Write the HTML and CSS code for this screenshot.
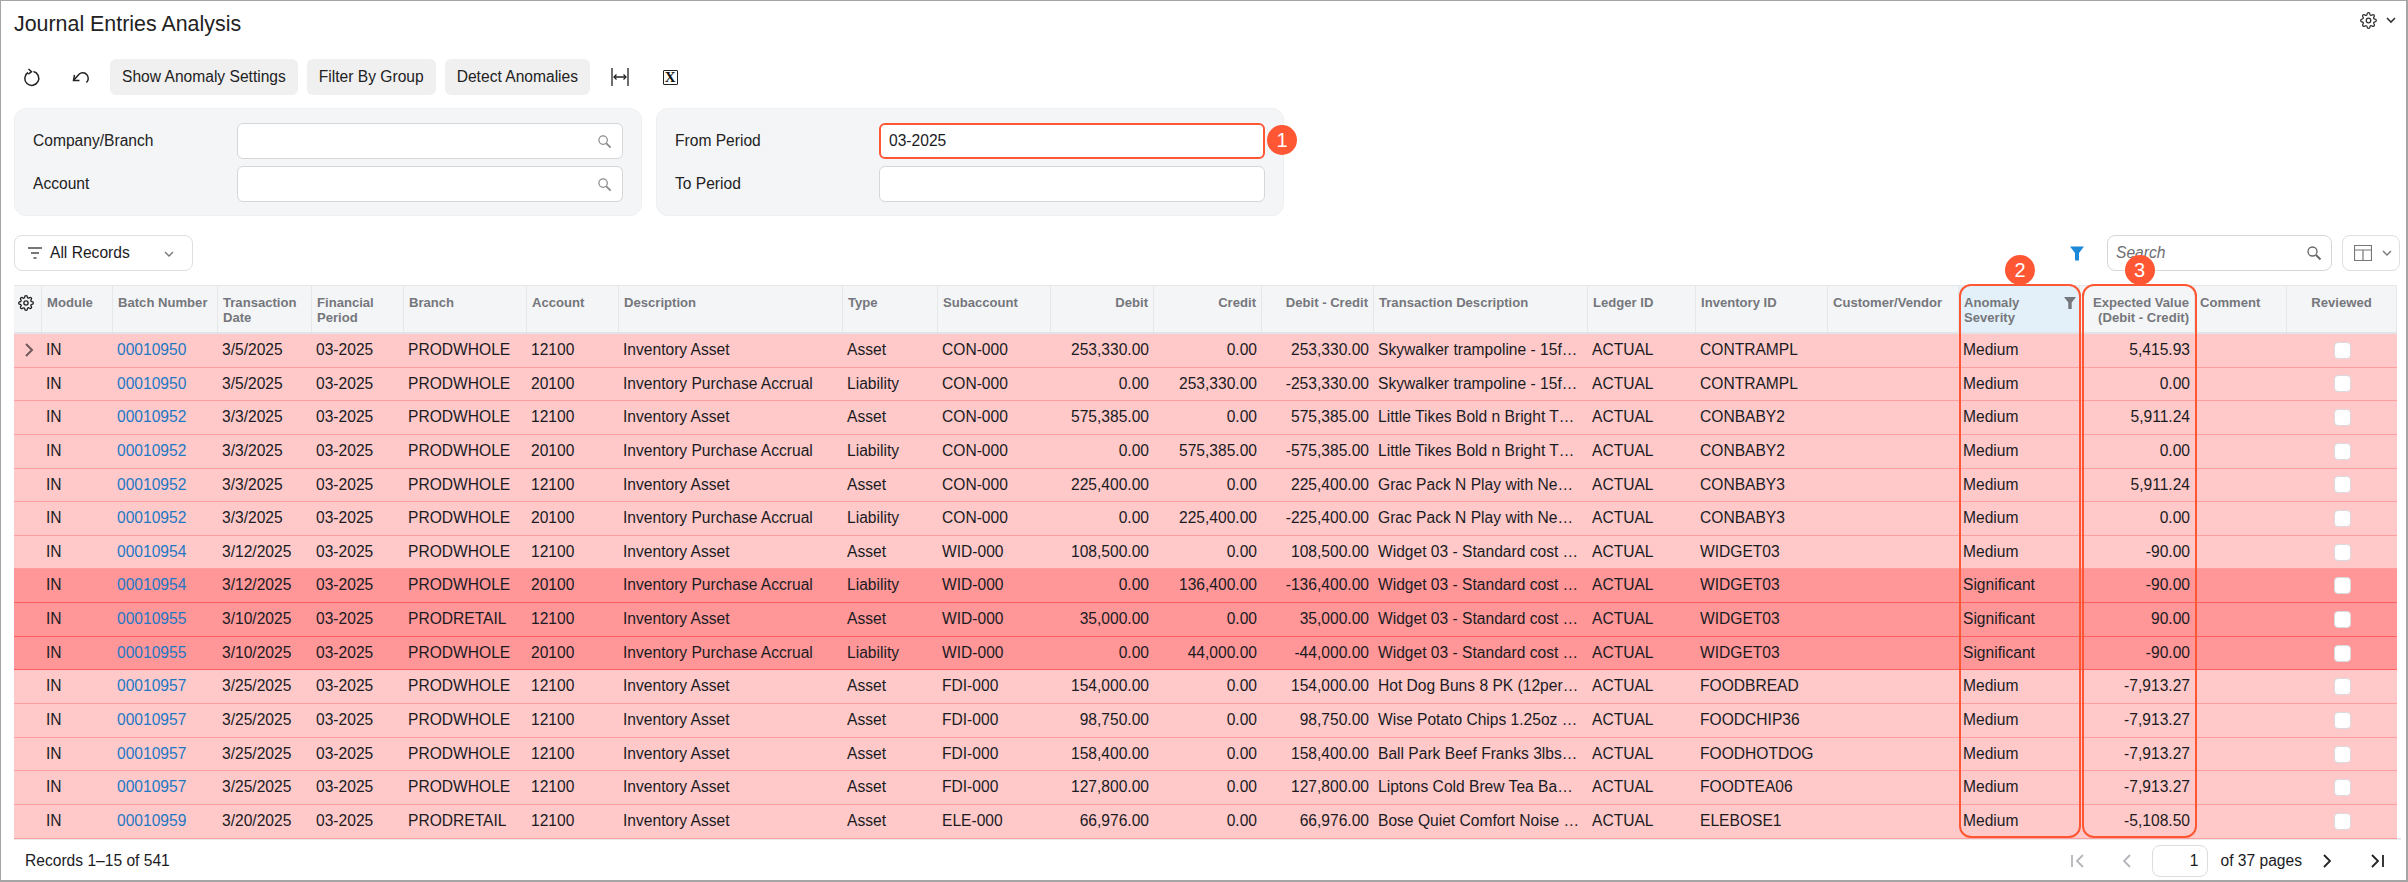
FILE: index.html
```html
<!DOCTYPE html>
<html lang="en">
<head>
    <meta charset="UTF-8">
    <meta name="viewport" content="width=device-width, initial-scale=1.0">
    <title>Journal Entries Analysis</title>
    <link rel="stylesheet" href="styles.css">
</head>
<body>
    <svg class="defs" width="0" height="0">
        <symbol id="gear" viewBox="0 0 24 24"><circle cx="12" cy="12" r="3.2"/><path d="M19.4 15a1.65 1.65 0 0 0 .33 1.82l.06.06a2 2 0 0 1 0 2.83 2 2 0 0 1-2.83 0l-.06-.06a1.65 1.65 0 0 0-1.82-.33 1.65 1.65 0 0 0-1 1.51V21a2 2 0 0 1-2 2 2 2 0 0 1-2-2v-.09A1.65 1.65 0 0 0 9 19.4a1.65 1.65 0 0 0-1.82.33l-.06.06a2 2 0 0 1-2.83 0 2 2 0 0 1 0-2.83l.06-.06a1.65 1.65 0 0 0 .33-1.82 1.65 1.65 0 0 0-1.51-1H3a2 2 0 0 1-2-2 2 2 0 0 1 2-2h.09A1.65 1.65 0 0 0 4.6 9a1.65 1.65 0 0 0-.33-1.82l-.06-.06a2 2 0 0 1 0-2.83 2 2 0 0 1 2.83 0l.06.06a1.65 1.65 0 0 0 1.82.33H9a1.65 1.65 0 0 0 1-1.51V3a2 2 0 0 1 2-2 2 2 0 0 1 2 2v.09a1.65 1.65 0 0 0 1 1.51 1.65 1.65 0 0 0 1.82-.33l.06-.06a2 2 0 0 1 2.83 0 2 2 0 0 1 0 2.83l-.06.06a1.65 1.65 0 0 0-.33 1.82V9a1.65 1.65 0 0 0 1.51 1H21a2 2 0 0 1 2 2 2 2 0 0 1-2 2h-.09a1.65 1.65 0 0 0-1.51 1z"/></symbol>
        <symbol id="loupe" viewBox="0 0 16 16"><circle cx="6.5" cy="6.5" r="4.5"/><path d="M10 10l4.500 4.500" stroke-width="2"/></symbol>
        <symbol id="chev" viewBox="0 0 12 12"><path d="M2 4l4 4 4-4"/></symbol>
    </svg>
    <div class="page">
        <div class="title_bar">
            <h1>Journal Entries Analysis</h1>
            <div class="title_tools">
                <svg class="ico gear_top"><use href="#gear"/></svg>
                <svg class="ico chev_dark"><use href="#chev"/></svg>
            </div>
        </div>

        <div class="toolbar">
            <span class="tool_ico">
                <svg class="ico" viewBox="0 0 20 20" width="20" height="20"><path d="M11.500 4.600A7 7 0 1 1 6 5.500"/><path d="M6.500 2l3 2.800-3.200 2.400"/></svg>
            </span>
            <span class="tool_ico">
                <svg class="ico" viewBox="0 0 20 20" width="20" height="20"><path d="M3.500 13.500L9 7.200a5.200 5.200 0 0 1 7.400 8.300"/><path d="M4.500 8l-1 5.500h6"/></svg>
            </span>
            <button class="btn">Show Anomaly Settings</button>
            <button class="btn">Filter By Group</button>
            <button class="btn">Detect Anomalies</button>
            <span class="tool_ico first">
                <svg class="ico fit" viewBox="0 0 20 20" width="20" height="20"><path d="M2 1v18M18 1v18M4 10h12"/><path d="M6.500 7.500L4 10l2.500 2.500M13.500 7.500L16 10l-2.500 2.500"/></svg>
            </span>
            <span class="tool_ico"><span class="xl_ico">X</span></span>
        </div>

        <div class="filters">
            <div class="panel">
                <label>Company/Branch</label>
                <div class="field"><svg class="ico loupe"><use href="#loupe"/></svg></div>
                <label>Account</label>
                <div class="field"><svg class="ico loupe"><use href="#loupe"/></svg></div>
            </div>
            <div class="panel">
                <label>From Period</label>
                <div class="field hot">03-2025<span class="badge badge_one">1</span></div>
                <label>To Period</label>
                <div class="field"></div>
            </div>
        </div>

        <div class="grid_bar">
            <div class="rec_select">
                <svg class="ico lines" viewBox="0 0 14 12" width="14" height="12"><path d="M0 1h14M3 6h8M5.500 11h3"/></svg>
                All Records
                <svg class="ico chev_grey"><use href="#chev"/></svg>
            </div>
            <div class="grid_tools">
                <svg class="funnel" viewBox="0 0 14 14" width="14" height="15"><path d="M0 0h14L9 6.500V14H5V6.500z"/></svg>
                <div class="search">Search<svg class="ico loupe dark"><use href="#loupe"/></svg></div>
                <div class="col_btn">
                    <svg class="ico" viewBox="0 0 18 16" width="18" height="16"><path d="M.5.500h17v15H.5zM.5 5h17M9 5v10.500"/></svg>
                    <svg class="ico chev_grey"><use href="#chev"/></svg>
                </div>
            </div>
        </div>

        <div class="table_wrap">
            <div class="row head">
                <span class="th"><svg class="ico gear_head"><use href="#gear"/></svg></span>
                <span class="th">Module</span>
                <span class="th">Batch Number</span>
                <span class="th">Transaction Date</span>
                <span class="th">Financial Period</span>
                <span class="th">Branch</span>
                <span class="th">Account</span>
                <span class="th">Description</span>
                <span class="th">Type</span>
                <span class="th">Subaccount</span>
                <span class="th num">Debit</span>
                <span class="th num">Credit</span>
                <span class="th num">Debit - Credit</span>
                <span class="th">Transaction Description</span>
                <span class="th">Ledger ID</span>
                <span class="th">Inventory ID</span>
                <span class="th">Customer/Vendor</span>
                <span class="th sorted">Anomaly Severity<svg class="sort_funnel" viewBox="0 0 14 14" width="12" height="12"><path d="M0 0h14L9 6.500V14H5V6.500z"/></svg></span>
                <span class="th num">Expected Value (Debit - Credit)</span>
                <span class="th">Comment</span>
                <span class="th mid">Reviewed</span>
            </div>

            <div class="row">
                <span class="td"><svg class="row_arrow" viewBox="0 0 10 16" width="10" height="16"><path d="M2 2l6 6-6 6"/></svg></span><span class="td">IN</span><a class="td link">00010950</a><span class="td">3/5/2025</span><span class="td">03-2025</span><span class="td">PRODWHOLE</span><span class="td">12100</span><span class="td">Inventory Asset</span><span class="td">Asset</span><span class="td">CON-000</span><span class="td num">253,330.00</span><span class="td num">0.00</span><span class="td num">253,330.00</span><span class="td">Skywalker trampoline - 15f…</span><span class="td">ACTUAL</span><span class="td">CONTRAMPL</span><span class="td"></span><span class="td">Medium</span><span class="td num">5,415.93</span><span class="td"></span><span class="td mid"><i class="check"></i></span>
            </div>
            <div class="row">
                <span class="td"></span><span class="td">IN</span><a class="td link">00010950</a><span class="td">3/5/2025</span><span class="td">03-2025</span><span class="td">PRODWHOLE</span><span class="td">20100</span><span class="td">Inventory Purchase Accrual</span><span class="td">Liability</span><span class="td">CON-000</span><span class="td num">0.00</span><span class="td num">253,330.00</span><span class="td num">-253,330.00</span><span class="td">Skywalker trampoline - 15f…</span><span class="td">ACTUAL</span><span class="td">CONTRAMPL</span><span class="td"></span><span class="td">Medium</span><span class="td num">0.00</span><span class="td"></span><span class="td mid"><i class="check"></i></span>
            </div>
            <div class="row">
                <span class="td"></span><span class="td">IN</span><a class="td link">00010952</a><span class="td">3/3/2025</span><span class="td">03-2025</span><span class="td">PRODWHOLE</span><span class="td">12100</span><span class="td">Inventory Asset</span><span class="td">Asset</span><span class="td">CON-000</span><span class="td num">575,385.00</span><span class="td num">0.00</span><span class="td num">575,385.00</span><span class="td">Little Tikes Bold n Bright T…</span><span class="td">ACTUAL</span><span class="td">CONBABY2</span><span class="td"></span><span class="td">Medium</span><span class="td num">5,911.24</span><span class="td"></span><span class="td mid"><i class="check"></i></span>
            </div>
            <div class="row">
                <span class="td"></span><span class="td">IN</span><a class="td link">00010952</a><span class="td">3/3/2025</span><span class="td">03-2025</span><span class="td">PRODWHOLE</span><span class="td">20100</span><span class="td">Inventory Purchase Accrual</span><span class="td">Liability</span><span class="td">CON-000</span><span class="td num">0.00</span><span class="td num">575,385.00</span><span class="td num">-575,385.00</span><span class="td">Little Tikes Bold n Bright T…</span><span class="td">ACTUAL</span><span class="td">CONBABY2</span><span class="td"></span><span class="td">Medium</span><span class="td num">0.00</span><span class="td"></span><span class="td mid"><i class="check"></i></span>
            </div>
            <div class="row">
                <span class="td"></span><span class="td">IN</span><a class="td link">00010952</a><span class="td">3/3/2025</span><span class="td">03-2025</span><span class="td">PRODWHOLE</span><span class="td">12100</span><span class="td">Inventory Asset</span><span class="td">Asset</span><span class="td">CON-000</span><span class="td num">225,400.00</span><span class="td num">0.00</span><span class="td num">225,400.00</span><span class="td">Grac Pack N Play with Ne…</span><span class="td">ACTUAL</span><span class="td">CONBABY3</span><span class="td"></span><span class="td">Medium</span><span class="td num">5,911.24</span><span class="td"></span><span class="td mid"><i class="check"></i></span>
            </div>
            <div class="row">
                <span class="td"></span><span class="td">IN</span><a class="td link">00010952</a><span class="td">3/3/2025</span><span class="td">03-2025</span><span class="td">PRODWHOLE</span><span class="td">20100</span><span class="td">Inventory Purchase Accrual</span><span class="td">Liability</span><span class="td">CON-000</span><span class="td num">0.00</span><span class="td num">225,400.00</span><span class="td num">-225,400.00</span><span class="td">Grac Pack N Play with Ne…</span><span class="td">ACTUAL</span><span class="td">CONBABY3</span><span class="td"></span><span class="td">Medium</span><span class="td num">0.00</span><span class="td"></span><span class="td mid"><i class="check"></i></span>
            </div>
            <div class="row">
                <span class="td"></span><span class="td">IN</span><a class="td link">00010954</a><span class="td">3/12/2025</span><span class="td">03-2025</span><span class="td">PRODWHOLE</span><span class="td">12100</span><span class="td">Inventory Asset</span><span class="td">Asset</span><span class="td">WID-000</span><span class="td num">108,500.00</span><span class="td num">0.00</span><span class="td num">108,500.00</span><span class="td">Widget 03 - Standard cost …</span><span class="td">ACTUAL</span><span class="td">WIDGET03</span><span class="td"></span><span class="td">Medium</span><span class="td num">-90.00</span><span class="td"></span><span class="td mid"><i class="check"></i></span>
            </div>
            <div class="row high">
                <span class="td"></span><span class="td">IN</span><a class="td link">00010954</a><span class="td">3/12/2025</span><span class="td">03-2025</span><span class="td">PRODWHOLE</span><span class="td">20100</span><span class="td">Inventory Purchase Accrual</span><span class="td">Liability</span><span class="td">WID-000</span><span class="td num">0.00</span><span class="td num">136,400.00</span><span class="td num">-136,400.00</span><span class="td">Widget 03 - Standard cost …</span><span class="td">ACTUAL</span><span class="td">WIDGET03</span><span class="td"></span><span class="td">Significant</span><span class="td num">-90.00</span><span class="td"></span><span class="td mid"><i class="check"></i></span>
            </div>
            <div class="row high">
                <span class="td"></span><span class="td">IN</span><a class="td link">00010955</a><span class="td">3/10/2025</span><span class="td">03-2025</span><span class="td">PRODRETAIL</span><span class="td">12100</span><span class="td">Inventory Asset</span><span class="td">Asset</span><span class="td">WID-000</span><span class="td num">35,000.00</span><span class="td num">0.00</span><span class="td num">35,000.00</span><span class="td">Widget 03 - Standard cost …</span><span class="td">ACTUAL</span><span class="td">WIDGET03</span><span class="td"></span><span class="td">Significant</span><span class="td num">90.00</span><span class="td"></span><span class="td mid"><i class="check"></i></span>
            </div>
            <div class="row high">
                <span class="td"></span><span class="td">IN</span><a class="td link">00010955</a><span class="td">3/10/2025</span><span class="td">03-2025</span><span class="td">PRODWHOLE</span><span class="td">20100</span><span class="td">Inventory Purchase Accrual</span><span class="td">Liability</span><span class="td">WID-000</span><span class="td num">0.00</span><span class="td num">44,000.00</span><span class="td num">-44,000.00</span><span class="td">Widget 03 - Standard cost …</span><span class="td">ACTUAL</span><span class="td">WIDGET03</span><span class="td"></span><span class="td">Significant</span><span class="td num">-90.00</span><span class="td"></span><span class="td mid"><i class="check"></i></span>
            </div>
            <div class="row">
                <span class="td"></span><span class="td">IN</span><a class="td link">00010957</a><span class="td">3/25/2025</span><span class="td">03-2025</span><span class="td">PRODWHOLE</span><span class="td">12100</span><span class="td">Inventory Asset</span><span class="td">Asset</span><span class="td">FDI-000</span><span class="td num">154,000.00</span><span class="td num">0.00</span><span class="td num">154,000.00</span><span class="td">Hot Dog Buns 8 PK (12per…</span><span class="td">ACTUAL</span><span class="td">FOODBREAD</span><span class="td"></span><span class="td">Medium</span><span class="td num">-7,913.27</span><span class="td"></span><span class="td mid"><i class="check"></i></span>
            </div>
            <div class="row">
                <span class="td"></span><span class="td">IN</span><a class="td link">00010957</a><span class="td">3/25/2025</span><span class="td">03-2025</span><span class="td">PRODWHOLE</span><span class="td">12100</span><span class="td">Inventory Asset</span><span class="td">Asset</span><span class="td">FDI-000</span><span class="td num">98,750.00</span><span class="td num">0.00</span><span class="td num">98,750.00</span><span class="td">Wise Potato Chips 1.25oz …</span><span class="td">ACTUAL</span><span class="td">FOODCHIP36</span><span class="td"></span><span class="td">Medium</span><span class="td num">-7,913.27</span><span class="td"></span><span class="td mid"><i class="check"></i></span>
            </div>
            <div class="row">
                <span class="td"></span><span class="td">IN</span><a class="td link">00010957</a><span class="td">3/25/2025</span><span class="td">03-2025</span><span class="td">PRODWHOLE</span><span class="td">12100</span><span class="td">Inventory Asset</span><span class="td">Asset</span><span class="td">FDI-000</span><span class="td num">158,400.00</span><span class="td num">0.00</span><span class="td num">158,400.00</span><span class="td">Ball Park Beef Franks 3lbs…</span><span class="td">ACTUAL</span><span class="td">FOODHOTDOG</span><span class="td"></span><span class="td">Medium</span><span class="td num">-7,913.27</span><span class="td"></span><span class="td mid"><i class="check"></i></span>
            </div>
            <div class="row">
                <span class="td"></span><span class="td">IN</span><a class="td link">00010957</a><span class="td">3/25/2025</span><span class="td">03-2025</span><span class="td">PRODWHOLE</span><span class="td">12100</span><span class="td">Inventory Asset</span><span class="td">Asset</span><span class="td">FDI-000</span><span class="td num">127,800.00</span><span class="td num">0.00</span><span class="td num">127,800.00</span><span class="td">Liptons Cold Brew Tea Ba…</span><span class="td">ACTUAL</span><span class="td">FOODTEA06</span><span class="td"></span><span class="td">Medium</span><span class="td num">-7,913.27</span><span class="td"></span><span class="td mid"><i class="check"></i></span>
            </div>
            <div class="row">
                <span class="td"></span><span class="td">IN</span><a class="td link">00010959</a><span class="td">3/20/2025</span><span class="td">03-2025</span><span class="td">PRODRETAIL</span><span class="td">12100</span><span class="td">Inventory Asset</span><span class="td">Asset</span><span class="td">ELE-000</span><span class="td num">66,976.00</span><span class="td num">0.00</span><span class="td num">66,976.00</span><span class="td">Bose Quiet Comfort Noise …</span><span class="td">ACTUAL</span><span class="td">ELEBOSE1</span><span class="td"></span><span class="td">Medium</span><span class="td num">-5,108.50</span><span class="td"></span><span class="td mid"><i class="check"></i></span>
            </div>

            <!-- callouts over the table -->
            <div class="mark mark_sev"><span class="badge">2</span></div>
            <div class="mark mark_exp"><span class="badge">3</span></div>
        </div>

        <div class="foot">
            <span>Records 1–15 of 541</span>
            <div class="pager">
                <svg class="pg off" viewBox="0 0 16 16" width="16" height="16"><path d="M2 2v12M13 2L7 8l6 6"/></svg>
                <svg class="pg off prev" viewBox="0 0 16 16" width="16" height="16"><path d="M11 2L5 8l6 6"/></svg>
                <span class="pg_input">1</span>
                <span>of 37 pages</span>
                <svg class="pg next" viewBox="0 0 16 16" width="16" height="16"><path d="M5 2l6 6-6 6"/></svg>
                <svg class="pg last" viewBox="0 0 16 16" width="16" height="16"><path d="M3 2l6 6-6 6M14 2v12"/></svg>
            </div>
        </div>
    </div>
</body>
</html>
```

FILE: styles.css
```css
*{margin:0;padding:0;box-sizing:border-box;}
html,body{height:100%;overflow:hidden;background:#fff;}
body{font-family:"Liberation Sans",Arial,sans-serif;font-size:15.6px;color:#1b1b1f;}
.defs{position:absolute;}
.ico{fill:none;stroke:#222;stroke-width:1.5;flex:none;}

.page{position:relative;width:2408px;height:882px;border:1px solid #a5a5a5;border-width:1px 2px 2px 1px;}

/* title */
.title_bar{display:flex;justify-content:space-between;align-items:center;height:46px;padding:0 9px 0 13px;}
.title_bar h1{font-size:21.4px;font-weight:400;color:#222;}
.title_tools{display:flex;align-items:center;gap:8px;margin-top:-8px;}
.gear_top{width:17px;height:17px;stroke:#333;stroke-width:1.8;}
.chev_dark{width:12px;height:12px;stroke:#333;stroke-width:1.6;}

/* toolbar */
.toolbar{display:flex;align-items:center;height:36px;margin-top:12px;padding-left:13px;}
.tool_ico{display:flex;justify-content:center;align-items:center;width:36px;height:36px;margin-right:12px;}
.tool_ico.first{margin-left:3px;margin-right:14px;}
.fit{stroke-width:1.3;}
.xl_ico{display:block;width:15px;height:15px;border:1.5px solid #222;border-radius:1px;font:700 15px/12px "Liberation Serif",serif;text-align:center;color:#111;}
.btn{height:36px;padding:0 12px;margin-right:9px;border:0;border-radius:6px;background:#f0f0f1;font:15.6px "Liberation Sans",sans-serif;color:#222;}

/* filters */
.filters{display:flex;gap:14px;margin-top:13px;padding-left:13px;}
.panel{display:grid;grid-template-columns:204px 386px;align-items:center;row-gap:7px;width:628px;height:108px;padding:14px 18px;background:#f4f5f7;border:1px solid #eeeff1;border-radius:12px;}
.panel label{color:#222;padding-bottom:1px;}
.field{position:relative;display:flex;align-items:center;height:36px;padding-left:9px;background:#fff;border:1px solid #d6d7db;border-radius:6px;color:#1b1b1f;}
.field.hot{border:2px solid #ff5733;padding-left:8px;}
.loupe{position:absolute;right:10px;top:50%;width:15px;height:15px;margin-top:-7px;stroke:#8a8a8a;stroke-width:1.3;}
.loupe.dark{stroke:#666;}

.badge{position:absolute;display:flex;justify-content:center;align-items:center;width:30px;height:30px;border-radius:50%;background:#ff5733;color:#fff;font-size:20px;}
.badge_one{right:-34px;top:0;}

/* grid bar */
.grid_bar{display:flex;justify-content:space-between;height:36px;margin-top:19px;padding:0 6px 0 13px;}
.rec_select{position:relative;display:flex;align-items:center;width:179px;height:36px;padding-left:13px;border:1px solid #dedfe3;border-radius:8px;}
.lines{margin-right:8px;stroke:#777;stroke-width:2;}
.chev_grey{width:12px;height:12px;stroke:#777;stroke-width:1.4;}
.rec_select .chev_grey{position:absolute;right:17px;top:12px;}
.grid_tools{display:flex;align-items:center;}
.funnel{fill:#1e88d8;margin-right:23px;}
.search{position:relative;display:flex;align-items:center;width:225px;height:36px;padding-left:8px;border:1px solid #d6d7db;border-radius:8px;font-style:italic;color:#6d6d72;}
.search .loupe{right:9px;width:16px;height:16px;margin-top:-8px;}
.col_btn{display:flex;align-items:center;gap:9px;width:58px;height:36px;margin-left:10px;padding-left:11px;border:1px solid #dedfe3;border-radius:8px;}
.col_btn .ico:first-child{stroke:#777;stroke-width:1.2;}

/* table */
.table_wrap{position:relative;margin:14px 5px 0 13px;padding-right:4px;height:555px;border-bottom:2px solid #e8e9eb;}
.row{display:grid;grid-template-columns:28px 71px 105px 94px 92px 123px 92px 224px 95px 113px 103px 108px 112px 214px 108px 132px 131px 121px 115px 92px 110px;height:33.65px;background:#ffc9c9;border-bottom:1px solid #ff9e9e;}
.row.high{background:#ff9698;border-bottom-color:#ff5f5f;}
.row.head{height:49px;background:#f4f5f7;border-top:1px solid #e6e7e9;border-bottom:2px solid #e3e4e7;}
.th{padding:9px 5px 0;border-right:1px solid #e6e7e9;font-size:13.1px;font-weight:700;line-height:15px;color:#75777c;}
.th.num{text-align:right;}
.th.mid{text-align:center;}
.th.sorted{position:relative;padding-right:40px;background:#e3f0f9;}
.sort_funnel{position:absolute;right:3px;top:11px;fill:#75777c;}
.gear_head{width:16px;height:16px;margin-left:-1px;stroke:#222;stroke-width:2;}
.td{display:block;padding:0 4px;overflow:hidden;white-space:nowrap;line-height:32px;}
.td.num{padding-right:5px;text-align:right;}
.td.mid{display:flex;justify-content:center;align-items:center;}
.link{color:#1e78c4;}
.check{display:block;width:17px;height:17px;background:#fff;border:1px solid #d9d9de;border-radius:4px;}
.row_arrow{fill:none;stroke:#6e5a5a;stroke-width:2;margin:8px 0 0 6px;}

.mark{position:absolute;top:-1px;bottom:0;border:2px solid #ff5733;border-radius:12px;}
.mark_sev{left:1945px;width:122px;}
.mark_exp{left:2068px;width:115px;}
.mark .badge{left:50%;top:-31px;margin-left:-15px;}

/* footer */
.foot{display:flex;justify-content:space-between;align-items:center;height:40px;padding:2px 21px 0 24px;}
.pager{display:flex;align-items:center;}
.pg{fill:none;stroke:#222;stroke-width:1.8;}
.pg.off{stroke:#b4b6ba;margin-right:33px;}
.pg.prev{margin-right:17px;}
.pg_input{width:56px;height:32px;margin-right:12px;padding-right:9px;border:1px solid #dcdde0;border-radius:8px;text-align:right;line-height:30px;}
.pg.next{margin:0 34px 0 17px;}
```
